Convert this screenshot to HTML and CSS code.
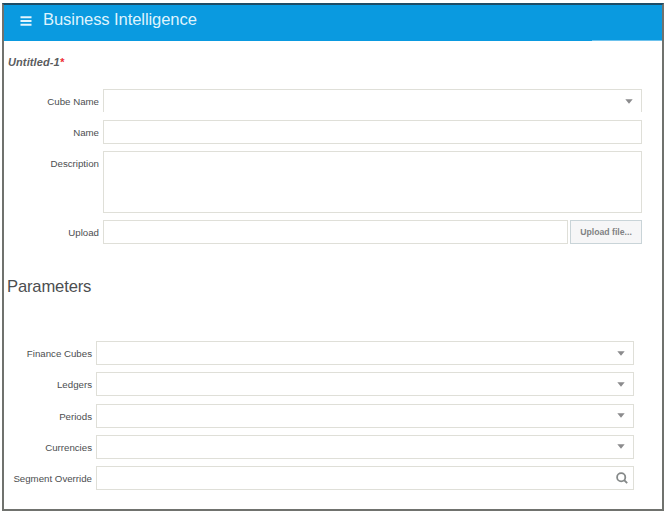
FILE: index.html
```html
<!DOCTYPE html>
<html lang="en">
<head>
<meta charset="utf-8">
<title>Business Intelligence</title>
<link rel="stylesheet" href="styles.css">
</head>
<body>
<div class="window">
  <header class="topbar">
    <svg class="menu" width="12" height="10" viewBox="0 0 12 10"><path d="M.5 1.2h11M.5 5h11M.5 8.8h11" stroke="#e4f5fd" stroke-width="2"/></svg>
    <h1>Business Intelligence</h1>
  </header>
  <div class="doc-title">Untitled-1<span class="required">*</span></div>
  <form class="details">
    <div class="row"><label>Cube Name</label><div class="field cube"><svg class="caret" width="8" height="5" viewBox="0 0 8 5"><path d="M.3.3h7.4L4 4.8z"/></svg></div></div>
    <div class="row"><label>Name</label><div class="field"></div></div>
    <div class="row tall"><label>Description</label><div class="field"></div></div>
    <div class="row upload"><label>Upload</label><div class="field"></div><button type="button">Upload file...</button></div>
  </form>
  <h2>Parameters</h2>
  <form class="parameters">
    <div class="row"><label>Finance Cubes</label><div class="field"><svg class="caret" width="8" height="5" viewBox="0 0 8 5"><path d="M.3.3h7.4L4 4.8z"/></svg></div></div>
    <div class="row"><label>Ledgers</label><div class="field"><svg class="caret" width="8" height="5" viewBox="0 0 8 5"><path d="M.3.3h7.4L4 4.8z"/></svg></div></div>
    <div class="row"><label>Periods</label><div class="field"><svg class="caret" width="8" height="5" viewBox="0 0 8 5"><path d="M.3.3h7.4L4 4.8z"/></svg></div></div>
    <div class="row"><label>Currencies</label><div class="field"><svg class="caret" width="8" height="5" viewBox="0 0 8 5"><path d="M.3.3h7.4L4 4.8z"/></svg></div></div>
    <div class="row"><label>Segment Override</label><div class="field"><svg class="search" width="12" height="12" viewBox="0 0 12 12"><circle cx="5.2" cy="5.2" r="4.1"/><path d="M8 8l3.2 3.2"/></svg></div></div>
  </form>
</div>
</body>
</html>
```
FILE: styles.css
```css
* { box-sizing: border-box; }
body {
  margin: 0;
  padding: 3px 0 0 2px;
  background: #fff;
  font-family: "Liberation Sans", Arial, sans-serif;
  color: #4c4e50;
}
.window {
  width: 662px;
  height: 508px;
  border: 2px solid #70726e;
  border-top-color: #1d4c66;
}
.topbar {
  display: flex;
  align-items: center;
  height: 36px;
  padding: 0 0 6px 16px;
  background: linear-gradient(#6cc2ed, #6cc2ed) right bottom / 70px 1px no-repeat #0a9ae0;
}
.menu { margin: 2px 11px 0 0; }
h1 {
  margin: 0;
  font-size: 16.6px;
  font-weight: 400;
  line-height: 20px;
  letter-spacing: -0.1px;
  color: #dff3fd;
}
.doc-title {
  height: 48px;
  padding: 14px 0 0 4px;
  font-size: 11px;
  line-height: 14px;
  font-weight: 700;
  font-style: italic;
  letter-spacing: 0.1px;
  color: #5a5c5e;
}
.required { color: #ee2b35; }
.row { display: flex; }
.row label {
  flex: none;
  padding: 1px 4px 0 0;
  text-align: right;
  font-size: 9.7px;
  line-height: 24px;
  white-space: nowrap;
}
.field {
  flex: 1;
  display: flex;
  justify-content: flex-end;
  align-items: center;
  border: 1px solid #dfdfd8;
  background: #fff;
}
.details { width: 638px; }
.details .row { height: 24px; margin-bottom: 7px; }
.details label { width: 99px; }
.details .cube { height: 23px; border-bottom: 0; }
.details .tall { height: 62px; }
.details .upload { margin-bottom: 0; }
button {
  width: 72px;
  margin-left: 2px;
  padding: 1px 0 0;
  border: 1px solid #c9d4d8;
  background: #f6f6f7;
  font: 700 8.7px/21px "Liberation Sans", Arial, sans-serif;
  color: #808284;
}
h2 {
  height: 97px;
  margin: 0;
  padding: 33px 0 0 3px;
  font-size: 16.6px;
  line-height: 20px;
  font-weight: 400;
  letter-spacing: -0.15px;
}
.parameters {
  display: grid;
  gap: 7.25px;
  width: 630px;
}
.parameters label { width: 92px; }
.parameters .row { height: 24px; }
.caret { margin-right: 8px; fill: #8b8b8d; }
.search {
  margin-right: 5px;
  fill: none;
  stroke: #858989;
  stroke-width: 1.8;
}
```
